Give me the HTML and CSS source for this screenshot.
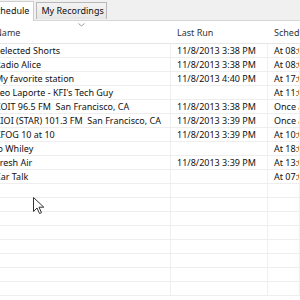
FILE: index.html
```html
<!DOCTYPE html>
<html lang="en">
<head>
    <meta charset="UTF-8">
    <title>Schedule</title>
    <link rel="stylesheet" href="styles.css">
</head>
<body>
    <div class="window">
        <div class="tabs">
            <div class="tab active">Schedule</div>
            <div class="tab">My Recordings</div>
        </div>
        <div class="list">
            <div class="row head">
                <div class="cell">Name
                    <svg class="sort" width="7" height="4" viewBox="0 0 7 4"><path d="M0.5 0.5 L3.5 3 L6.5 0.5" fill="none" stroke="#9a9a9a" stroke-width="1"/></svg>
                </div>
                <div class="cell">Last Run</div>
                <div class="cell">Schedule</div>
            </div>
            <div class="row"><div class="cell">Selected Shorts</div><div class="cell">11/8/2013 3:38 PM</div><div class="cell">At 08:00 AM</div></div>
            <div class="row"><div class="cell">Radio Alice</div><div class="cell">11/8/2013 3:38 PM</div><div class="cell">At 08:00 AM</div></div>
            <div class="row"><div class="cell">My favorite station</div><div class="cell">11/8/2013 4:40 PM</div><div class="cell">At 17:00 PM</div></div>
            <div class="row"><div class="cell">Leo Laporte - KFI's Tech Guy</div><div class="cell"></div><div class="cell">At 11:00 AM</div></div>
            <div class="row"><div class="cell">KOIT 96.5 FM&nbsp; San Francisco, CA</div><div class="cell">11/8/2013 3:38 PM</div><div class="cell">Once at</div></div>
            <div class="row"><div class="cell">KIOI (STAR) 101.3 FM&nbsp; San Francisco, CA</div><div class="cell">11/8/2013 3:39 PM</div><div class="cell">Once at</div></div>
            <div class="row"><div class="cell">KFOG 10 at 10</div><div class="cell">11/8/2013 3:39 PM</div><div class="cell">At 10:00 AM</div></div>
            <div class="row"><div class="cell">Jo Whiley</div><div class="cell"></div><div class="cell">At 18:00 PM</div></div>
            <div class="row"><div class="cell">Fresh Air</div><div class="cell">11/8/2013 3:39 PM</div><div class="cell">At 13:00 PM</div></div>
            <div class="row"><div class="cell">Car Talk</div><div class="cell"></div><div class="cell">At 07:00 AM</div></div>
            <div class="row"><div class="cell"></div><div class="cell"></div><div class="cell"></div></div>
            <div class="row"><div class="cell"></div><div class="cell"></div><div class="cell"></div></div>
            <div class="row"><div class="cell"></div><div class="cell"></div><div class="cell"></div></div>
            <div class="row"><div class="cell"></div><div class="cell"></div><div class="cell"></div></div>
            <div class="row"><div class="cell"></div><div class="cell"></div><div class="cell"></div></div>
            <div class="row"><div class="cell"></div><div class="cell"></div><div class="cell"></div></div>
            <div class="row"><div class="cell"></div><div class="cell"></div><div class="cell"></div></div>
            <div class="row"><div class="cell"></div><div class="cell"></div><div class="cell"></div></div>
        </div>
        <svg class="cursor" width="12" height="18" viewBox="0 0 12 18">
            <path d="M0.5 0.5 L0.5 14.5 L4 11 L6.5 16.5 L8.5 15.7 L6 10.2 L10.8 10.2 Z" fill="#fff" stroke="#333" stroke-width="1" stroke-linejoin="round"/>
        </svg>
    </div>
</body>
</html>
```

FILE: styles.css
```css
body {
    margin: 0;
    padding: 0;
    background: #fff;
    font-family: 'Noto Sans', sans-serif;
    font-size: 9px;
    color: #111;
    overflow: hidden;
}
.window {
    position: relative;
    width: 300px;
    height: 300px;
    overflow: hidden;
}
.tabs {
    display: flex;
    align-items: flex-end;
    gap: 2px;
    height: 21px;
    margin-left: -20px;
    background: #f0f0f0;
    border-bottom: 1px solid #d6d6d6;
    box-sizing: border-box;
}
.tab {
    height: 16px;
    line-height: 15px;
    padding: 0 2px 0 4px;
    background: linear-gradient(#f3f3f3, #e6e6e6);
    border: 1px solid #b8b8b8;
    border-bottom: none;
    color: #111;
    margin-bottom: 1px;
}
.tab.active {
    height: 19px;
    line-height: 18px;
    padding: 0 4px 0 6px;
    background: #fff;
    border-color: #cfcfcf;
    margin-bottom: -1px;
    margin-left: 4px;
}
.list {
    margin-left: -11px;
}
.row {
    display: grid;
    grid-template-columns: 182px 97px 1fr;
    height: 14px;
    border-bottom: 1px solid #eeeeee;
    box-sizing: border-box;
}
.row.head {
    height: 23px;
    border-bottom: 1px solid #e6e6e6;
}
.cell {
    position: relative;
    padding-left: 6px;
    line-height: 13px;
    white-space: nowrap;
    overflow: hidden;
    border-right: 1px solid #f0f0f0;
}
.head .cell {
    line-height: 20px;
    padding-top: 2px;
    color: #333;
    border-right: none;
}
.sort {
    position: absolute;
    left: 89px;
    top: 2px;
}
.cursor {
    position: absolute;
    left: 33px;
    top: 197px;
}
```
